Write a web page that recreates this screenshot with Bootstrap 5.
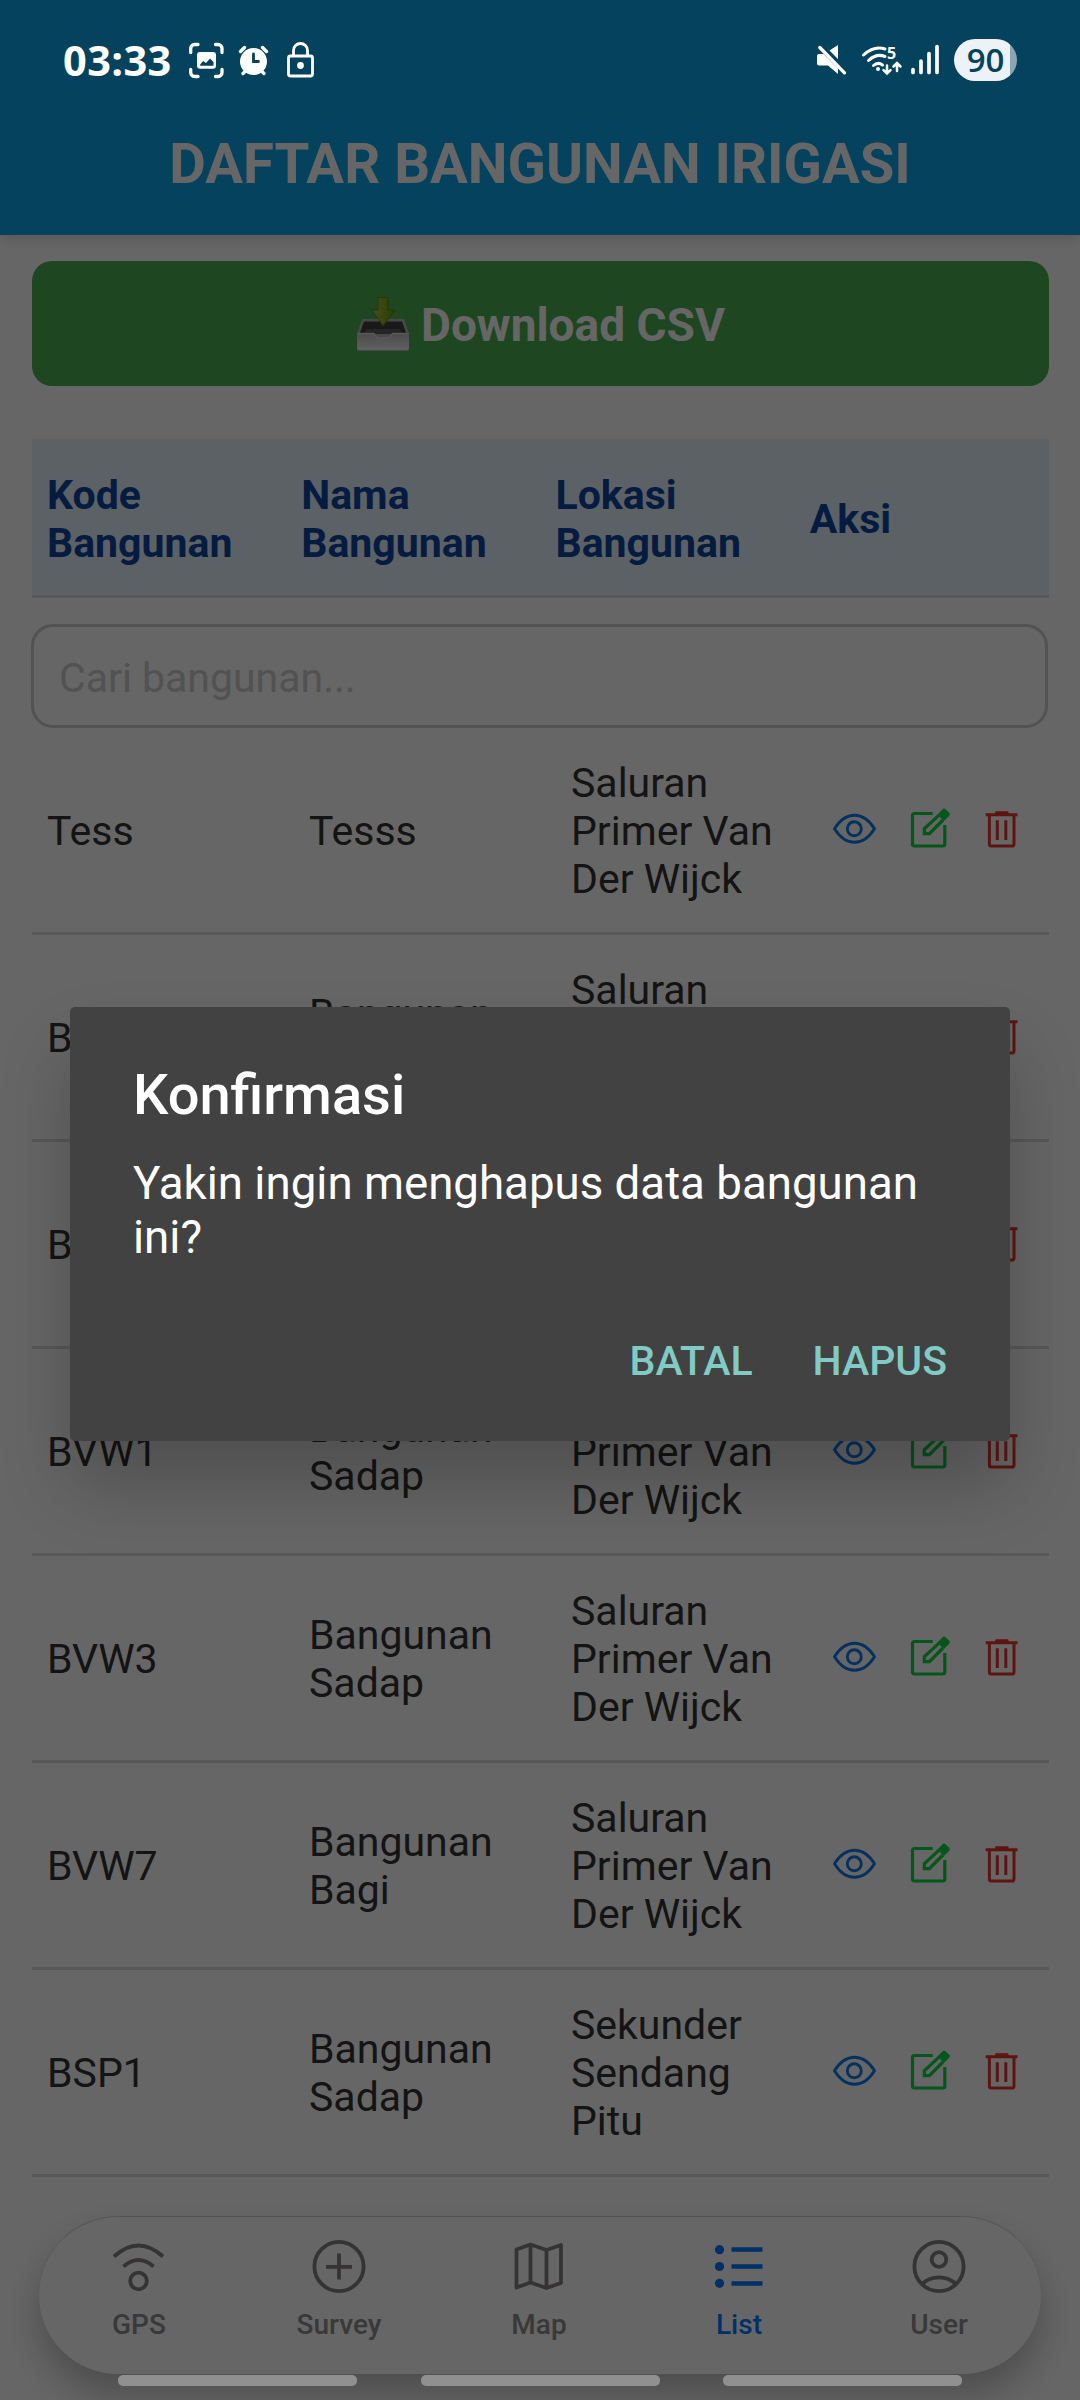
<!DOCTYPE html>
<html lang="id">
<head>
<meta charset="utf-8">
<meta name="viewport" content="width=device-width, initial-scale=1">
<title>Daftar Bangunan Irigasi</title>
<link href="https://cdn.jsdelivr.net/npm/bootstrap@5.3.0/dist/css/bootstrap.min.css" rel="stylesheet">
<style>
  body { font-family: Roboto, "Liberation Sans", sans-serif; font-size: 41px; line-height: 48px; color: #333; background: #fff; }
  .app-screen { height: 2400px; }
  .app-header { height: 235px; padding-top: 93px; background: #0ea5e9; color: #fff; box-shadow: 0 4px 12px rgba(0,0,0,.14); z-index: 1; }
  .app-title { font-size: 56.25px; line-height: 142px; height: 142px; font-weight: 700; }
  .app-body { padding: 26px 31px 0 32px; }
  .btn-csv { height: 125px; border-radius: 20px; border: 0; background: #4caf50; color: #fff; font-size: 46px; font-weight: 700; gap: 11px; }
  .btn-csv:hover { background: #4caf50; color: #fff; }
  .btn-csv span { padding-top: 4px; }
  .table-head { margin-top: 53px; height: 159px; background: #e3f2fd; border-bottom: 3px solid #ddd; color: #0d47a1; font-weight: 700; }
  .table-head > div { padding: 3px 14px 0 15px; }
  .data-row > .txt { padding: 2px 14px 0 15px; }
  .search-box { margin: 26px 1px 0 -1px; width: 1017px; height: 104px; border: 3px solid #ccc; border-radius: 22px; padding: 3px 25px 0; font-size: 41px; background: #fff; }
  .search-box::placeholder { color: #ccc; opacity: 1; }
  .data-row { height: 207px; border-bottom: 3px solid #ddd; }
  .data-row > .txt { width: 262px; flex: none; }
  .acts { padding-left: 15px; gap: 34px; }
  .acts svg, .bottom-nav svg, .status-bar svg { display: block; overflow: visible; fill: none; }
  .ic-eye { color: #0d7cf2; } .ic-edit { color: #0cd845; } .ic-del { color: #e53529; }
  .bottom-nav { left: 39px; top: 2216px; width: 1002px; height: 158px; border-radius: 79px; background: #fff; border-top: 1px solid #ccc; box-shadow: 0 20px 36px rgba(0,0,0,.25); font-size: 28px; line-height: 34px; font-weight: 500; color: #8e8e8e; padding: 18px 2px 0 0; }
  .bottom-nav svg { width: 60px; height: 60px; margin-bottom: 13px; color: #858181; }
  .bottom-nav .active, .bottom-nav .active svg { color: #007aff; }
  .dimmer { background: rgba(0,0,0,.6); height: 2400px; z-index: 1050; }
  .alert-wrap { height: 2400px; padding-top: 48px; z-index: 1055; }
  .alert-box { width: 940px; height: 434px; background: #424242; border-radius: 5px; color: #fff; box-shadow: 0 45px 70px rgba(0,0,0,.22); padding: 55px 63px 0 63px; }
  .alert-title { font-size: 56px; line-height: 66px; font-weight: 500; margin-bottom: 29px; }
  .alert-msg { font-size: 45.65px; line-height: 54px; margin-bottom: 72px; }
  .alert-actions { gap: 60px; }
  .alert-box .btn { border: 0; padding: 0; color: #80cbc4; font-size: 41px; line-height: 48px; font-weight: 500; }
  .status-bar { height: 120px; z-index: 1060; color: #fff; padding: 0 63px 0 63px; }
  .clock { font: 700 41.5px/56px "Open Sans", "Noto Sans", sans-serif; letter-spacing: .4px; }
  .battery { width: 63px; height: 42px; border-radius: 21px; background: linear-gradient(90deg, #ecf2f5 56px, #8aa6b4 56px); color: #05425d; font: 600 33px/42px "Open Sans", "Noto Sans", sans-serif; }
  .sys-icons-end { margin-right: 14px; }
  .home-bar { top: 2375px; gap: 63.500px; z-index: 1060; }
  .home-bar span { width: 239px; height: 11px; border-radius: 5px; background: #909090; }
</style>
<script src="https://cdn.jsdelivr.net/npm/bootstrap@5.3.0/dist/js/bootstrap.bundle.min.js"></script>
</head>
<body class="overflow-hidden">

<svg class="d-none">
  <symbol id="eye" viewBox="0 -5 43 44">
    <path d="M1.500 15.800C7 7 14 2.300 21.500 2.300S36 7 41.500 15.800C36 24.600 29 29.300 21.500 29.300S7 24.600 1.500 15.800Z" fill="none" stroke="currentColor" stroke-width="2.900" stroke-linejoin="round"/>
    <circle cx="21.300" cy="15.800" r="7" fill="none" stroke="currentColor" stroke-width="2.900"/>
  </symbol>
  <symbol id="edit" viewBox="0 1 41 44">
    <path d="M22.700 6.500H4.500a2 2 0 0 0-2 2V37a2 2 0 0 0 2 2H32.800a2 2 0 0 0 2-2V18" fill="none" stroke="currentColor" stroke-width="3.200"/>
    <path d="M29 8.200 14.300 21.800V26.600H19.400L33 13" fill="none" stroke="currentColor" stroke-width="3.200"/>
    <path d="M27.400 7.600 32.400 2.400q1.700-1.600 3.400 0l3.200 3.200q1.600 1.600 0 3.300l-5.100 5Z" fill="currentColor"/>
  </symbol>
  <symbol id="trash" viewBox="0 -3 33 44">
    <path d="M.7 3.800H32.500M4.400 4V33.300a1.800 1.800 0 0 0 1.800 1.800H27.200a1.800 1.800 0 0 0 1.800-1.800V4M12.300 9.300V29M20.800 9.300V29" fill="none" stroke="currentColor" stroke-width="3"/>
    <path d="M10.200 3.500V1.300q0-1 1-1H22.500q1 0 1 1V3.500Z" fill="currentColor"/>
  </symbol>
</svg>

<div class="app-screen position-relative overflow-hidden">
  <header class="app-header position-relative">
    <h1 class="app-title text-center m-0">DAFTAR BANGUNAN IRIGASI</h1>
  </header>

  <main class="app-body">
    <button class="btn btn-csv w-100 d-flex justify-content-center align-items-center">
      <svg width="54" height="56" viewBox="0 0 54 56" aria-hidden="true">
        <defs>
          <linearGradient id="tray" x1="0" y1="0" x2="0" y2="1"><stop offset="0" stop-color="#bdbdbd"/><stop offset="1" stop-color="#f1ecf2"/></linearGradient>
          <linearGradient id="arr" x1="0" y1="0" x2="1" y2="0"><stop offset="0" stop-color="#a9c34e"/><stop offset="1" stop-color="#6f9a00"/></linearGradient>
        </defs>
        <path d="M6 23H48L53 38V53Q53 55 51 55H3Q1 55 1 53V38Z" fill="#b5b5b5"/>
        <path d="M8 25.500H46L50.500 38H3.500Z" fill="#404040"/>
        <path d="M10 33H44L46 38H8Z" fill="#5c5c5c"/>
        <path d="M1 37H18L21 41H34L37 37H53V52Q53 54 51 54H3Q1 54 1 52Z" fill="url(#tray)"/>
        <path d="M1.500 37.500H18L21.500 42H33L36.500 37.500H52.500" fill="none" stroke="#dcdcdc" stroke-width="1.500"/>
        <path d="M22 1.500H32V14H39L27 30 16 14H22Z" fill="url(#arr)" stroke="#5c8500" stroke-width=".8"/>
      </svg>
      <span>Download CSV</span>
    </button>

    <div class="table-head d-flex align-items-center">
      <div class="col-3">Kode Bangunan</div>
      <div class="col-3">Nama Bangunan</div>
      <div class="col-3">Lokasi Bangunan</div>
      <div class="col-3">Aksi</div>
    </div>

    <input class="search-box d-block" type="text" placeholder="Cari bangunan...">

    <div class="data-row d-flex align-items-center">
      <div class="txt">Tess</div><div class="txt">Tesss</div><div class="txt">Saluran Primer Van Der Wijck</div>
      <div class="acts d-flex"><svg class="ic-eye" width="43" height="44"><use href="#eye"/></svg><svg class="ic-edit" width="41" height="44"><use href="#edit"/></svg><svg class="ic-del" width="33" height="44"><use href="#trash"/></svg></div>
    </div>
    <div class="data-row d-flex align-items-center">
      <div class="txt">BVW2</div><div class="txt">Bangunan Sadap</div><div class="txt">Saluran Primer Van Der Wijck</div>
      <div class="acts d-flex"><svg class="ic-eye" width="43" height="44"><use href="#eye"/></svg><svg class="ic-edit" width="41" height="44"><use href="#edit"/></svg><svg class="ic-del" width="33" height="44"><use href="#trash"/></svg></div>
    </div>
    <div class="data-row d-flex align-items-center">
      <div class="txt">BVW5</div><div class="txt">Bangunan Sadap</div><div class="txt">Saluran Primer Van Der Wijck</div>
      <div class="acts d-flex"><svg class="ic-eye" width="43" height="44"><use href="#eye"/></svg><svg class="ic-edit" width="41" height="44"><use href="#edit"/></svg><svg class="ic-del" width="33" height="44"><use href="#trash"/></svg></div>
    </div>
    <div class="data-row d-flex align-items-center">
      <div class="txt">BVW1</div><div class="txt">Bangunan Sadap</div><div class="txt">Saluran Primer Van Der Wijck</div>
      <div class="acts d-flex"><svg class="ic-eye" width="43" height="44"><use href="#eye"/></svg><svg class="ic-edit" width="41" height="44"><use href="#edit"/></svg><svg class="ic-del" width="33" height="44"><use href="#trash"/></svg></div>
    </div>
    <div class="data-row d-flex align-items-center">
      <div class="txt">BVW3</div><div class="txt">Bangunan Sadap</div><div class="txt">Saluran Primer Van Der Wijck</div>
      <div class="acts d-flex"><svg class="ic-eye" width="43" height="44"><use href="#eye"/></svg><svg class="ic-edit" width="41" height="44"><use href="#edit"/></svg><svg class="ic-del" width="33" height="44"><use href="#trash"/></svg></div>
    </div>
    <div class="data-row d-flex align-items-center">
      <div class="txt">BVW7</div><div class="txt">Bangunan Bagi</div><div class="txt">Saluran Primer Van Der Wijck</div>
      <div class="acts d-flex"><svg class="ic-eye" width="43" height="44"><use href="#eye"/></svg><svg class="ic-edit" width="41" height="44"><use href="#edit"/></svg><svg class="ic-del" width="33" height="44"><use href="#trash"/></svg></div>
    </div>
    <div class="data-row d-flex align-items-center">
      <div class="txt">BSP1</div><div class="txt">Bangunan Sadap</div><div class="txt">Sekunder Sendang Pitu</div>
      <div class="acts d-flex"><svg class="ic-eye" width="43" height="44"><use href="#eye"/></svg><svg class="ic-edit" width="41" height="44"><use href="#edit"/></svg><svg class="ic-del" width="33" height="44"><use href="#trash"/></svg></div>
    </div>
  </main>

  <nav class="bottom-nav position-absolute d-flex">
    <div class="col d-flex flex-column align-items-center">
      <svg viewBox="0 0 60 60" stroke="currentColor" stroke-width="3.800"><path d="M5 21.500Q29.500-.5 54 21.500M14.500 31.500Q29.500 18.500 44.500 31.500"/><circle cx="29.500" cy="46" r="8.300"/></svg>GPS</div>
    <div class="col d-flex flex-column align-items-center">
      <svg viewBox="0 0 60 60" stroke="currentColor" stroke-width="3.800"><circle cx="30" cy="31.500" r="24.600"/><path d="M30 18.500V44.500M17 31.800H43"/></svg>Survey</div>
    <div class="col d-flex flex-column align-items-center">
      <svg viewBox="0 0 60 60" stroke="currentColor" stroke-width="3.800" stroke-linejoin="round"><path d="M7.500 14.500 21.500 9.500 37.500 15 52 10V48L37.500 53 21.500 47.500 7.500 52.500ZM21.500 9.500V47.500M37.500 15V53"/></svg>Map</div>
    <div class="col d-flex flex-column align-items-center active">
      <svg viewBox="0 0 60 60" stroke="currentColor" stroke-width="4.400"><path d="M22.500 14.500H53.500M22.500 31.500H53.500M22.500 48.500H53.500"/><g fill="currentColor" stroke="none"><circle cx="10.500" cy="14.700" r="4.600"/><circle cx="10.500" cy="31.500" r="4.600"/><circle cx="10.500" cy="48.300" r="4.600"/></g></svg>List</div>
    <div class="col d-flex flex-column align-items-center">
      <svg viewBox="0 0 60 60" stroke="currentColor" stroke-width="3.800"><circle cx="30" cy="31.500" r="24.600"/><circle cx="30" cy="24.500" r="7.300"/><path d="M13 49Q20 42.300 30 42.300T47 49"/></svg>User</div>
  </nav>
</div>

<div class="dimmer position-absolute top-0 start-0 w-100"></div>

<div class="alert-wrap position-absolute top-0 start-0 w-100 d-flex align-items-center justify-content-center">
  <div class="alert-box" role="alertdialog">
    <div class="alert-title">Konfirmasi</div>
    <div class="alert-msg">Yakin ingin menghapus data bangunan ini?</div>
    <div class="alert-actions d-flex justify-content-end">
      <button class="btn">BATAL</button><button class="btn">HAPUS</button>
    </div>
  </div>
</div>

<div class="status-bar position-absolute top-0 start-0 w-100 d-flex align-items-center">
  <span class="clock">03:33</span>
  <svg width="128" height="40" viewBox="188 41 128 40" class="ms-3" stroke="#fff" stroke-width="3.300" stroke-linecap="round">
    <path d="M190.700 53.500V49.500a4 4 0 0 1 4-4H198M215.500 45.500H218a4 4 0 0 1 4 4V53.500M222 70.500V73.500a4 4 0 0 1-4 4H215.500M198 77.500H194.700a4 4 0 0 1-4-4V70.500"/>
    <rect x="197" y="53" width="19" height="16.700" rx="3" fill="#fff" stroke="none"/>
    <path d="M200.200 65.500 203.200 62 206 64 210 59.500 213.500 63V66.800H200.200Z" stroke="none" fill="#05425d"/>
    <circle cx="253.500" cy="62.500" r="13.500" fill="#fff" stroke="none"/>
    <path d="M240.500 52.500 244.500 48.500M266.500 52.500 262.500 48.500M243 74.500 246 71.500M264 74.500 261 71.500"/>
    <path d="M253.500 55V62.500H258.500" stroke="#05425d" stroke-width="2.800"/>
    <rect x="288.500" y="57" width="24" height="20" rx="2" stroke-width="2.800"/>
    <path d="M293.500 56V51.500a7 7 0 0 1 14 0V56" stroke-width="2.800"/><circle cx="300.500" cy="66.500" r="3.400" fill="#fff" stroke="none"/>
  </svg>
  <svg width="124" height="40" viewBox="816 41 124 40" class="sys-icons-end ms-auto" stroke="#fff" stroke-width="3.200" stroke-linecap="round">
    <path d="M838 46V60L829.500 51.500ZM819 55H823.500L838 69.500V75L828 66.500H819Q817 66.500 817 64.500V57Q817 55 819 55Z" fill="#fff" stroke="none"/>
    <path d="M819.800 48.500 844.500 73.800" stroke-width="3.300"/>
    <path d="M863.500 56Q874 46.500 885 50M868.500 61.500Q876.500 54 885 57.500M873.500 66.500Q878 62.500 882.500 66" stroke-width="3"/><circle cx="878" cy="70" r="2" fill="#fff" stroke="none"/>
    <path d="M887 66.500V74M883.500 71.200 887 74.500 890.500 71.200M897 72V64.500M893.500 67.500 897 64 900.500 67.500" stroke-width="2.500"/>
    <text x="887" y="60" font-family="Open Sans, Noto Sans, sans-serif" font-size="16" font-weight="700" fill="#fff" stroke="none">5</text>
    <path d="M913 70.500V73.500M921 62V73.500M929 54.500V73.500M937 47.500V73.500" stroke-width="3.700"/>
  </svg>
  <div class="battery text-center">90</div>
</div>

<div class="home-bar position-absolute start-0 w-100 d-flex justify-content-center">
  <span></span><span></span><span></span>
</div>

</body>
</html>
